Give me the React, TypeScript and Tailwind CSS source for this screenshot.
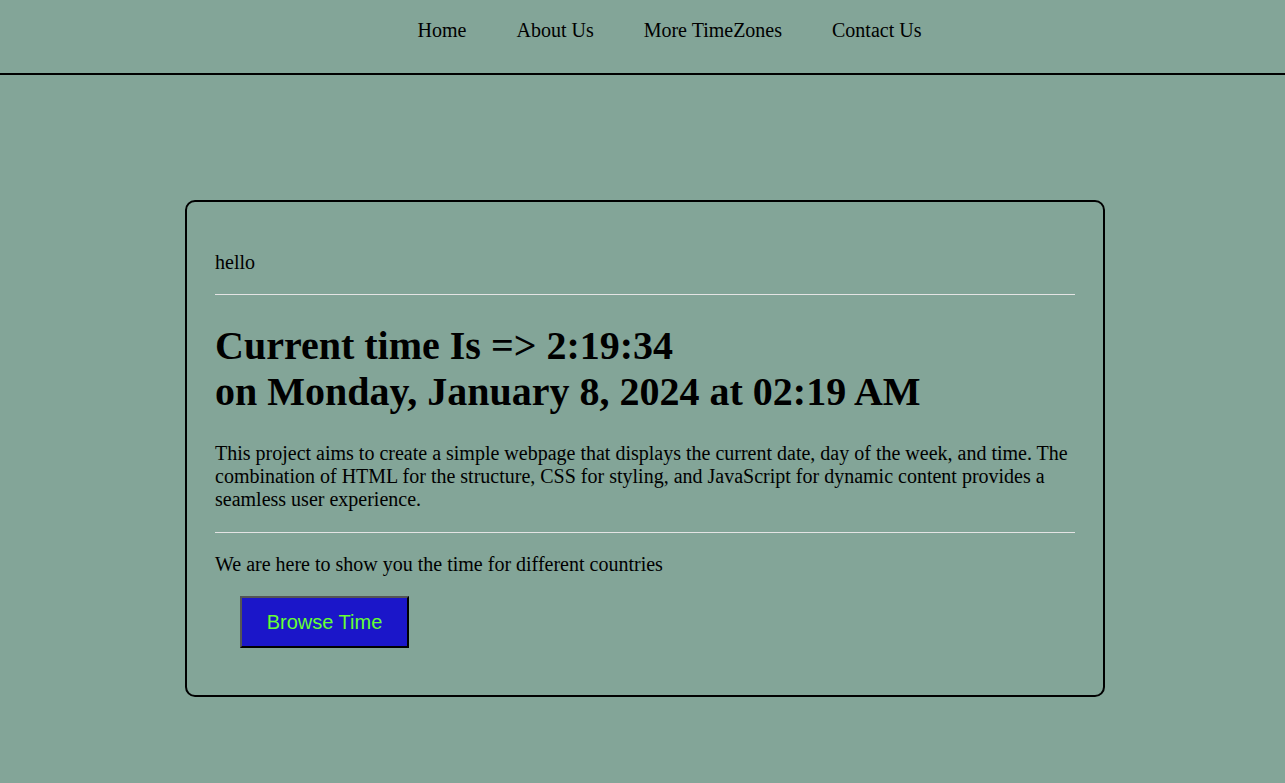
const navLinks = ['Home', 'About Us', 'More TimeZones', 'Contact Us'];

export default function App() {
  return (
    <div className="min-h-screen bg-[#83a598] text-black font-['Liberation_Serif',serif]">
      <nav className="h-[75px] border-b-2 border-black pt-[19px] pl-[54px] flex justify-center gap-[50px] text-[20px] leading-[23px]">
        {navLinks.map((link) => (
          <a key={link} href="#" className="text-black">
            {link}
          </a>
        ))}
      </nav>

      <div className="pt-[125px] pl-[5px] pb-[87px]">
        <div className="w-[920px] mx-auto border-2 border-black rounded-[10px] px-[28px] pt-[49px] pb-[47px]">
          <p className="text-[20px] leading-[23px]">hello</p>
          <div className="mt-[20px] h-px bg-[#e4e4e4]" />

          <h1 className="mt-[28px] text-[40px] leading-[46px] font-bold">
            Current time Is =&gt; 2:19:34
            <br />
            on Monday, January 8, 2024 at 02:19 AM
          </h1>

          <p className="mt-[27px] text-[20px] leading-[23px]">
            This project aims to create a simple webpage that displays the current date, day of the week, and time. The
            combination of HTML for the structure, CSS for styling, and JavaScript for dynamic content provides a
            seamless user experience.
          </p>
          <div className="mt-[21px] h-px bg-[#e4e4e4]" />

          <p className="mt-[20px] text-[20px] leading-[23px]">We are here to show you the time for different countries</p>

          <button className="mt-[20px] ml-[25px] w-[169px] h-[52px] bg-[#1b16c9] text-[#66ff33] text-[20px] font-['Liberation_Sans',sans-serif] border-2 border-t-[#555555] border-l-[#555555] border-b-black border-r-black">
            Browse Time
          </button>
        </div>
      </div>
    </div>
  );
}
